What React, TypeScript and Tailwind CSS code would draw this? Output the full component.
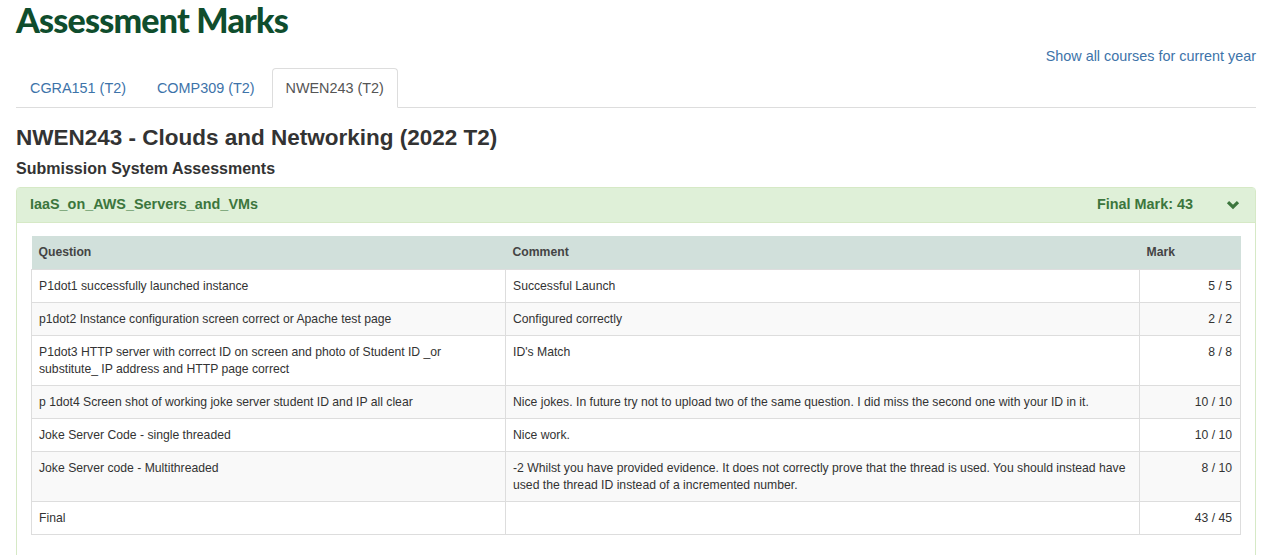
const rows: { q: string; c: string; m: string }[] = [
  { q: "P1dot1 successfully launched instance", c: "Successful Launch", m: "5 / 5" },
  { q: "p1dot2 Instance configuration screen correct or Apache test page", c: "Configured correctly", m: "2 / 2" },
  {
    q: "P1dot3 HTTP server with correct ID on screen and photo of Student ID _or substitute_ IP address and HTTP page correct",
    c: "ID's Match",
    m: "8 / 8",
  },
  {
    q: "p 1dot4 Screen shot of working joke server student ID and IP all clear",
    c: "Nice jokes. In future try not to upload two of the same question. I did miss the second one with your ID in it.",
    m: "10 / 10",
  },
  { q: "Joke Server Code - single threaded", c: "Nice work.", m: "10 / 10" },
  {
    q: "Joke Server code - Multithreaded",
    c: "-2 Whilst you have provided evidence. It does not correctly prove that the thread is used. You should instead have used the thread ID instead of a incremented number.",
    m: "8 / 10",
  },
  { q: "Final", c: "", m: "43 / 45" },
];

const tabs = ["CGRA151 (T2)", "COMP309 (T2)", "NWEN243 (T2)"];

function Chevron() {
  return (
    <svg width="14" height="10" viewBox="0 0 14 10" className="ml-[33px]">
      <path d="M2 2.2 L7 7 L12 2.2" fill="none" stroke="#3c763d" strokeWidth="3.2" strokeLinejoin="miter" />
    </svg>
  );
}

export default function App() {
  return (
    <div className="min-h-screen bg-white pl-4 pr-[18px] font-['Liberation_Sans',Arial,sans-serif] text-[#333]">
      <h1 className="font-['Lato',sans-serif] text-[34px] font-black leading-[40px] tracking-[-0.8px] text-[#0f4d2d]">
        Assessment Marks
      </h1>

      <div className="mt-[6px] flex justify-end">
        <a className="text-[14.4px] leading-[20px] text-[#3d73a9]">Show all courses for current year</a>
      </div>

      {/* tabs */}
      <ul className="mt-[2px] flex border-b border-[#ddd]">
        {tabs.map((t, i) => {
          const active = i === 2;
          return (
            <li key={t} className="-mb-px mr-[3px]">
              <a
                className={
                  active
                    ? "block rounded-t-[4px] border border-[#ddd] border-b-white bg-white px-[13px] py-[9px] text-[14.4px] leading-[20px] text-[#555]"
                    : "block rounded-t-[4px] border border-transparent px-[13px] py-[9px] text-[14.4px] leading-[20px] text-[#3d73a9]"
                }
              >
                {t}
              </a>
            </li>
          );
        })}
      </ul>

      <h3 className="mt-[18px] text-[22.5px] font-bold leading-[24px] text-[#333]">
        NWEN243 - Clouds and Networking (2022 T2)
      </h3>
      <h4 className="mt-[9px] text-[16px] font-bold leading-[20px] text-[#333]">Submission System Assessments</h4>

      {/* panel */}
      <div className="mt-[8px] rounded-t-[4px] border border-[#d6e9c6]">
        <div className="flex h-[34px] items-center bg-[#dff0d8] pl-[13px] pr-[15px] text-[14.4px] font-bold text-[#3c763d]">
          <span>IaaS_on_AWS_Servers_and_VMs</span>
          <span className="ml-auto">Final Mark: 43</span>
          <Chevron />
        </div>
        <div className="border-t border-[#d6e9c6] bg-white px-[14px] pt-[13px] pb-[20px]">
          <table className="w-full table-fixed border-collapse text-[12.2px] leading-[17px]">
            <colgroup>
              <col className="w-[474px]" />
              <col className="w-[634px]" />
              <col />
            </colgroup>
            <thead>
              <tr className="bg-[#d1e0db]">
                <th className="px-[7px] py-[8px] text-left font-bold text-[#444]">Question</th>
                <th className="px-[7px] py-[8px] text-left font-bold text-[#444]">Comment</th>
                <th className="px-[7px] py-[8px] text-left font-bold text-[#444]">Mark</th>
              </tr>
            </thead>
            <tbody>
              {rows.map((r, i) => (
                <tr key={i} className={i % 2 === 1 ? "bg-[#f9f9f9]" : "bg-white"}>
                  <td className="border border-[#ddd] px-[7px] py-[7.5px] align-top">{r.q}</td>
                  <td className="border border-[#ddd] px-[7px] py-[7.5px] align-top">{r.c}</td>
                  <td className="border border-[#ddd] px-[8px] py-[7.5px] text-right align-top">{r.m}</td>
                </tr>
              ))}
            </tbody>
          </table>
        </div>
      </div>
    </div>
  );
}
